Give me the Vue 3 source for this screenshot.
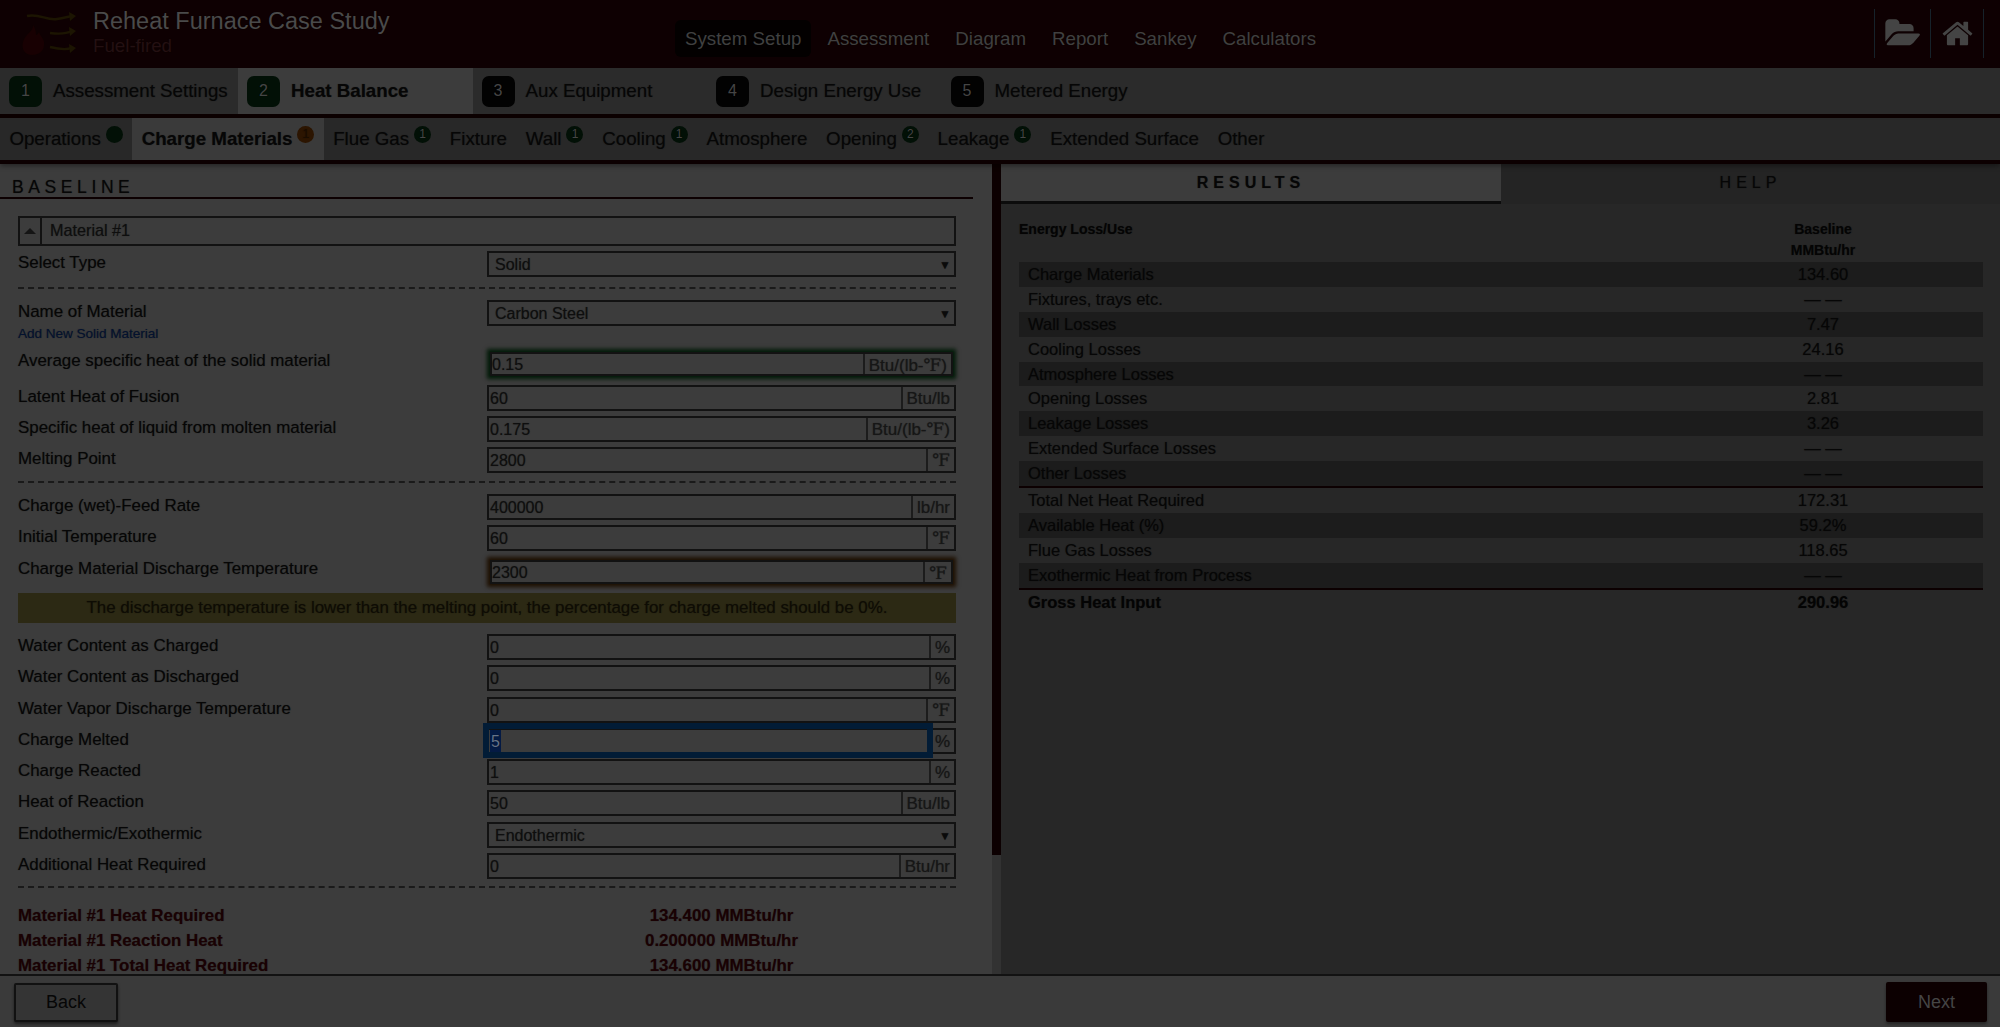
<script setup>
const nav = ['System Setup', 'Assessment', 'Diagram', 'Report', 'Sankey', 'Calculators']
const steps = [
  { n: 1, label: 'Assessment Settings', done: true },
  { n: 2, label: 'Heat Balance', done: true, active: true },
  { n: 3, label: 'Aux Equipment' },
  { n: 4, label: 'Design Energy Use' },
  { n: 5, label: 'Metered Energy' }
]
const subs = [
  { label: 'Operations', badge: '', kind: 'ok' },
  { label: 'Charge Materials', badge: '1', kind: 'warn', active: true },
  { label: 'Flue Gas', badge: '1', kind: 'ok' },
  { label: 'Fixture' },
  { label: 'Wall', badge: '1', kind: 'ok' },
  { label: 'Cooling', badge: '1', kind: 'ok' },
  { label: 'Atmosphere' },
  { label: 'Opening', badge: '2', kind: 'ok' },
  { label: 'Leakage', badge: '1', kind: 'ok' },
  { label: 'Extended Surface' },
  { label: 'Other' }
]
const results = [
  ['Charge Materials', '134.60'],
  ['Fixtures, trays etc.', '— —'],
  ['Wall Losses', '7.47'],
  ['Cooling Losses', '24.16'],
  ['Atmosphere Losses', '— —'],
  ['Opening Losses', '2.81'],
  ['Leakage Losses', '3.26'],
  ['Extended Surface Losses', '— —'],
  ['Other Losses', '— —']
]
const results2 = [
  ['Total Net Heat Required', '172.31'],
  ['Available Heat (%)', '59.2%'],
  ['Flue Gas Losses', '118.65'],
  ['Exothermic Heat from Process', '— —']
]
const totals = [
  ['Material #1 Heat Required', '134.400 MMBtu/hr'],
  ['Material #1 Reaction Heat', '0.200000 MMBtu/hr'],
  ['Material #1 Total Heat Required', '134.600 MMBtu/hr']
]
const group2 = [
  ['Latent Heat of Fusion', '60', 'Btu/lb'],
  ['Specific heat of liquid from molten material', '0.175', 'Btu/(lb-℉)'],
  ['Melting Point', '2800', '℉']
]
const group4 = [
  ['Water Content as Charged', '0', '%'],
  ['Water Content as Discharged', '0', '%'],
  ['Water Vapor Discharge Temperature', '0', '℉']
]
const group5 = [
  ['Charge Reacted', '1', '%'],
  ['Heat of Reaction', '50', 'Btu/lb']
]
</script>

<template>
  <div class="page">
    <header class="top">
      <div class="brand">
        <svg class="logo" viewBox="0 0 80 60" width="80" height="60">
          <path d="M33 25c1 6-8 9-10 17-2 7 2 13 9 13 8 0 13-5 12-13-1-5-4-6-5-10-1 2-2 3-3 3 0-4-1-7-3-10z" fill="#180002" />
          <g fill="none" stroke="#1c1502" stroke-width="2.4">
            <path d="M27 16c12-3 20 5 30 3 6-1 10-2 15-3" />
            <path d="M50 33c8 1 16 1 22-2" />
            <path d="M50 47c8 2 16 3 22 1" />
          </g>
          <g fill="#1c1502">
            <path d="M69 12l7 4-6 5z" />
            <path d="M69 27l7 4-6 5z" />
            <path d="M69 44l7 4-6 5z" />
          </g>
        </svg>
        <div class="titles">
          <div class="title">Reheat Furnace Case Study</div>
          <div class="subtitle">Fuel-fired</div>
        </div>
      </div>
      <nav class="nav">
        <a v-for="(n, i) in nav" :key="n" class="nav-item" :class="{ on: i === 0 }">{{ n }}</a>
      </nav>
      <div class="tools">
        <div class="tool tool-folder">
          <svg viewBox="0 0 1920 1792" width="36" height="33"><path d="M1879 952q0 31-31 66l-336 396q-43 51-120.500 86.500t-143.500 35.500h-1088q-34 0-60.500-13t-26.500-43q0-31 31-66l336-396q43-51 120.500-86.500t143.500-35.500h1088q34 0 60.500 13t26.500 43zm-343-344v160h-832q-94 0-197 47.500t-164 119.500l-337 396-5 6q0-4-.5-12.500t-.5-12.500v-960q0-92 66-158t158-66h320q92 0 158 66t66 158v32h544q92 0 158 66t66 158z" fill="#444" /></svg>
        </div>
        <div class="tool tool-home">
          <svg viewBox="0 0 1792 1792" width="33" height="33"><path d="M1472 992v480q0 26-19 45t-45 19h-384v-384h-256v384h-384q-26 0-45-19t-19-45v-480q0-1 .5-3t.5-3l575-474 575 474q1 2 1 6zm223-69l-62 74q-8 9-21 11h-3q-13 0-21-7l-692-577-692 577q-12 8-24 7-13-2-21-11l-62-74q-8-10-7-23.500t11-21.500l719-599q32-26 76-26t76 26l244 204v-195q0-14 9-23t23-9h192q14 0 23 9t9 23v408l219 182q10 8 11 21.500t-7 23.500z" fill="#444" /></svg>
        </div>
      </div>
    </header>

    <div class="steps">
      <div v-for="s in steps" :key="s.n" class="step" :class="{ active: s.active }">
        <span class="step-n" :class="{ done: s.done }">{{ s.n }}</span>
        <span class="step-label">{{ s.label }}</span>
      </div>
    </div>

    <div class="subs">
      <div v-for="s in subs" :key="s.label" class="sub" :class="{ active: s.active }">
        <span class="sub-label">{{ s.label }}</span>
        <span v-if="s.kind" class="badge" :class="s.kind">{{ s.badge }}</span>
      </div>
    </div>

    <main class="main">
      <section class="left">
        <div class="left-inner">
          <h2 class="baseline">BASELINE</h2>
          <div class="form">
            <div class="mat-head">
              <span class="mat-toggle"><i class="tri"></i></span>
              <span class="mat-name">Material #1</span>
            </div>

            <div class="row">
              <label>Select Type</label>
              <div class="ctl select"><span>Solid</span><b>▼</b></div>
            </div>
            <div class="dash dash-a"></div>

            <div class="row row-name">
              <div class="label-stack">
                <label>Name of Material</label>
                <a class="link">Add New Solid Material</a>
              </div>
              <div class="ctl select"><span>Carbon Steel</span><b>▼</b></div>
            </div>

            <div class="row row-glow">
              <label>Average specific heat of the solid material</label>
              <div class="glow">
                <div class="ctl green"><span class="val">0.15</span><span class="unit">Btu/(lb-℉)</span></div>
              </div>
            </div>

            <div v-for="g in group2" :key="g[0]" class="row">
              <label>{{ g[0] }}</label>
              <div class="ctl"><span class="val">{{ g[1] }}</span><span class="unit">{{ g[2] }}</span></div>
            </div>
            <div class="dash dash-b"></div>

            <div class="row">
              <label>Charge (wet)-Feed Rate</label>
              <div class="ctl"><span class="val">400000</span><span class="unit">lb/hr</span></div>
            </div>
            <div class="row">
              <label>Initial Temperature</label>
              <div class="ctl"><span class="val">60</span><span class="unit">℉</span></div>
            </div>
            <div class="row row-glow2">
              <label>Charge Material Discharge Temperature</label>
              <div class="glow">
                <div class="ctl amber"><span class="val">2300</span><span class="unit">℉</span></div>
              </div>
            </div>
            <div class="warning">The discharge temperature is lower than the melting point, the percentage for charge melted should be 0%.</div>

            <div v-for="g in group4" :key="g[0]" class="row late">
              <label>{{ g[0] }}</label>
              <div class="ctl"><span class="val">{{ g[1] }}</span><span class="unit">{{ g[2] }}</span></div>
            </div>
            <div class="row late">
              <label>Charge Melted</label>
              <div class="ctl focused">
                <span class="val"><span class="sel">5</span></span><span class="unit">%</span>
                <i class="focus-ring"></i>
              </div>
            </div>
            <div v-for="g in group5" :key="g[0]" class="row late">
              <label>{{ g[0] }}</label>
              <div class="ctl"><span class="val">{{ g[1] }}</span><span class="unit">{{ g[2] }}</span></div>
            </div>
            <div class="row late">
              <label>Endothermic/Exothermic</label>
              <div class="ctl select"><span>Endothermic</span><b>▼</b></div>
            </div>
            <div class="row">
              <label>Additional Heat Required</label>
              <div class="ctl"><span class="val">0</span><span class="unit">Btu/hr</span></div>
            </div>
            <div class="dash dash-c"></div>

            <div class="totals">
              <div v-for="t in totals" :key="t[0]" class="total">
                <span>{{ t[0] }}</span><span class="total-v">{{ t[1] }}</span>
              </div>
            </div>
          </div>
        </div>
        <div class="scroll"><div class="thumb"></div></div>
      </section>

      <section class="right">
        <div class="panel-tabs">
          <div class="ptab on">RESULTS</div>
          <div class="ptab">HELP</div>
        </div>
        <div class="table">
          <div class="thead">
            <span>Energy Loss/Use</span>
            <span class="tcol">Baseline<br />MMBtu/hr</span>
          </div>
          <div class="tgroup first">
            <div v-for="r in results" :key="r[0]" class="tr"><span>{{ r[0] }}</span><span class="tv">{{ r[1] }}</span></div>
          </div>
          <div class="tgroup second">
            <div v-for="r in results2" :key="r[0]" class="tr"><span>{{ r[0] }}</span><span class="tv">{{ r[1] }}</span></div>
          </div>
          <div class="tr gross"><span>Gross Heat Input</span><span class="tv">290.96</span></div>
        </div>
      </section>
    </main>

    <footer class="foot">
      <button class="btn back">Back</button>
      <button class="btn next">Next</button>
    </footer>
  </div>
</template>

<style>
html, body { margin: 0; background: #3a3a3a; }
</style>

<style scoped>
* { box-sizing: border-box; }
.page {
  width: 2000px; height: 1027px; overflow: hidden;
  display: flex; flex-direction: column;
  font-family: "Liberation Sans", Arial, sans-serif; color: #060606;
  background: #3a3a3a;
  text-shadow: 0 0 1px rgba(0, 0, 0, .45);
}

/* Header */
.top { height: 68px; flex: none; background: #0e0002; display: flex; position: relative; }
.brand { width: 675px; display: flex; }
.logo { flex: none; }
.titles { margin-left: 13px; padding-top: 7px; }
.title { font-size: 23.5px; line-height: 28px; color: #4a4a4a; }
.subtitle { font-size: 18.72px; line-height: 22px; color: #241012; }
.nav { display: flex; align-items: flex-start; gap: 6px; padding-top: 20px; }
.nav-item { height: 37px; line-height: 37px; padding: 0 10px; font-size: 18.72px; color: #404040; border-radius: 6px; white-space: nowrap; }
.nav-item.on { background: #030000; }
.tools { margin-left: auto; margin-right: 16px; margin-top: 9px; height: 49px; display: flex; border-left: 1px solid #16222a; }
.tool { display: flex; align-items: center; justify-content: center; border-right: 1px solid #16222a; }
.tool-folder { width: 56px; }
.tool-home { width: 53px; }

/* Steps */
.steps { height: 50px; flex: none; background: #2b2b2b; border-bottom: 4px solid #0c0001; display: flex; }
.step { display: flex; align-items: center; height: 46px; width: 234.5px; padding-left: 9px; gap: 11px; }
.step:first-child { width: 238px; }
.step.active { background: #3c3c3c; }
.step-n { width: 33px; height: 31px; border-radius: 7px; background: #020202; color: #454545; display: flex; align-items: center; justify-content: center; font-size: 16px; }
.step-n.done { background: #021006; }
.step-label { font-size: 18.72px; color: #060606; white-space: nowrap; }
.step.active .step-label { font-weight: bold; }

/* Sub tabs */
.subs { height: 46px; flex: none; background: #282828; border-bottom: 4px solid #0c0001; display: flex; box-shadow: 0 2px 5px rgba(0,0,0,.4); position: relative; z-index: 1; }
.sub { height: 42px; padding: 0 9.4px; display: flex; align-items: center; position: relative; white-space: nowrap; }
.sub.active { background: #3a3a3a; }
.sub-label { font-size: 18.72px; color: #060606; }
.sub.active .sub-label { font-weight: bold; }
.badge { width: 17px; height: 17px; margin: -9px 0 0 5px; border-radius: 50%; font-size: 12px; line-height: 17px; text-align: center; color: #454545; }
.badge.ok { background: #021006; }
.badge.warn { background: #2c1501; color: #190c00; }

/* Main */
.main { flex: 1; min-height: 0; display: flex; }
.left { width: 1001px; display: flex; background: #3c3c3c; }
.left-inner { width: 992px; overflow: hidden; }
.baseline { margin: 0; width: 973px; height: 35px; padding: 13px 0 0 12px; font-size: 17.5px; line-height: 20px; font-weight: normal; letter-spacing: 4.6px; color: #060606; border-bottom: 2px solid #0c0001; }
.form { padding: 17px 36px 0 18px; display: flex; flex-direction: column; }
.scroll { width: 9px; background: #323232; }
.thumb { height: 691px; background: #0c0001; }

.mat-head { height: 30px; flex: none; border: 2px solid #121212; display: flex; align-items: center; margin-bottom: 5px; }
.mat-toggle { width: 22px; height: 100%; flex: none; border-right: 2px solid #121212; display: flex; align-items: center; justify-content: center; }
.tri { width: 0; height: 0; border-left: 6px solid transparent; border-right: 6px solid transparent; border-bottom: 6px solid #151515; }
.mat-name { font-size: 16.2px; line-height: 24px; margin: -2px 0 0 8px; color: #0e0e0e; }

.row { display: grid; grid-template-columns: 469px 469px; height: 26px; flex: none; margin-bottom: 5px; }
.row.late { margin-bottom: 5.3px; }
.row label { font-size: 16.9px; line-height: 24px; color: #060606; white-space: nowrap; }
.ctl { height: 26px; border: 2px solid #121212; display: flex; align-items: stretch; font-size: 16px; color: #0e0e0e; position: relative; }
.val { flex: 1; padding-left: 1px; line-height: 23px; }
.unit { flex: none; padding: 0 4px; line-height: 24px; font-size: 17px; border-left: 2px solid #1c1c1c; color: #161616; font-family: "Liberation Sans", "DejaVu Serif", serif; }
.select { padding: 0 3px 0 6px; justify-content: space-between; line-height: 24px; }
.select b { font-size: 12px; font-weight: normal; color: #0a0a0a; }

.dash { height: 0; flex: none; border-top: 2px dashed #1a1a1a; }
.dash-a { margin: 5px 0 11px; }
.row-name { height: 42px; margin-bottom: 5px; }
.label-stack { display: flex; flex-direction: column; }
.link { font-size: 13.5px; line-height: 16px; color: #031230; margin-top: 2px; }
.row-glow { height: 33px; }
.row-glow label { line-height: 28px; }
.row-glow2 { height: 32px; }
.row-glow2 label { line-height: 26px; }
.glow { padding: 5px 3px 4px; height: 33px; }
.row-glow2 .glow { height: 32px; padding: 4px 3px; }
.glow .ctl { height: 24px; }
.glow .val { line-height: 22px; padding-left: 0; }
.glow .unit { line-height: 23px; }
.green { box-shadow: 0 0 4px 3px #021a08; }
.amber { box-shadow: 0 0 4px 3px #1e1002; }
.dash-b { margin: 3px 0 11px; }
.warning { height: 30px; flex: none; margin: 0 0 11px; background: #2c2914; text-align: center; font-size: 16.9px; line-height: 29px; color: #0e0c04; }
.dash-c { margin: 2px 0 0; }
.sel { background: #041a44; color: #667388; display: inline-block; padding: 0 1px; }
.focus-ring { position: absolute; left: -6px; top: -7px; width: 450px; height: 35px; border: 6px solid #021c36; pointer-events: none; }
.totals { padding-top: 15px; }
.total { display: grid; grid-template-columns: 469px 469px; height: 25px; line-height: 25px; font-size: 16.9px; font-weight: bold; color: #1a0103; white-space: nowrap; }
.total-v { text-align: center; }

/* Right */
.right { flex: 1; background: #272727; min-width: 0; }
.panel-tabs { display: flex; height: 40px; }
.ptab { flex: 1; text-align: center; line-height: 38px; font-size: 16px; letter-spacing: 5px; color: #060606; background: #242424; }
.ptab.on { flex: none; width: 500px; background: #3c3c3c; font-weight: bold; border-bottom: 3px solid #0c0c0c; }
.table { padding: 15px 17px 0 18px; }
.thead { display: flex; justify-content: space-between; height: 43px; font-size: 14px; font-weight: bold; line-height: 21px; color: #040404; }
.tcol { width: 120px; margin-right: 100px; text-align: center; }
.tr { height: 24.9px; line-height: 25px; padding-left: 9px; font-size: 16.5px; display: flex; justify-content: space-between; color: #060606; }
.first .tr:nth-child(odd) { background: #1c1c1c; }
.second .tr:nth-child(even) { background: #1c1c1c; }
.first { border-bottom: 2px solid #0c0001; }
.second { border-bottom: 2px solid #0c0001; }
.tv { width: 120px; margin-right: 100px; text-align: center; }
.gross { height: 25px; line-height: 25px; font-weight: bold; color: #040404; }

/* Footer */
.foot { height: 53px; flex: none; background: #3a3a3a; border-top: 2px solid #121212; display: flex; justify-content: space-between; align-items: flex-start; padding: 7px 13px 0 14px; }
.btn { height: 39px; font: 18px "Liberation Sans", Arial, sans-serif; border-radius: 2px; }
.back { width: 104px; background: #343434; border: 2px solid #111; color: #060606; box-shadow: 0 2px 3px rgba(0,0,0,.5); }
.next { width: 101px; height: 40px; margin-top: -1px; background: #0c0001; border: 0; color: #454545; box-shadow: 0 2px 3px rgba(0,0,0,.4); }
</style>
